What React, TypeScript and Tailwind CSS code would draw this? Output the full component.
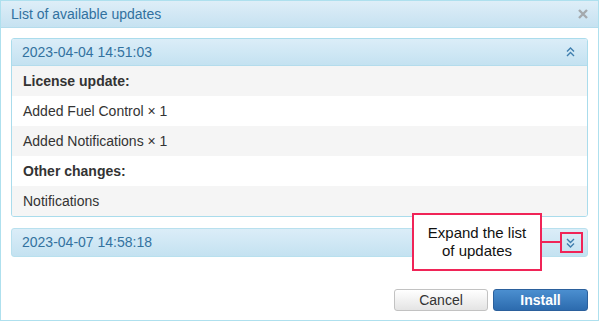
import React from 'react'

function Chevrons({ dir }: { dir: 'up' | 'down' }) {
  const d =
    dir === 'up'
      ? 'M1 4.5 L4.5 1 L8 4.5 M1 9 L4.5 5.5 L8 9'
      : 'M1 1 L4.5 4.5 L8 1 M1 5.5 L4.5 9 L8 5.5'
  return (
    <svg width="9" height="10" viewBox="0 0 9 10" className="block">
      <path d={d} fill="none" stroke="#3f7eae" strokeWidth="1.4" />
    </svg>
  )
}

const rows = [
  { text: 'License update:', bold: true },
  { text: 'Added Fuel Control × 1' },
  { text: 'Added Notifications × 1' },
  { text: 'Other changes:', bold: true },
  { text: 'Notifications' },
]

export default function App() {
  return (
    <div className="w-[600px] h-[323px] bg-white font-['Liberation_Sans',Arial,sans-serif] relative">
      <div className="w-[599px] h-[321px] border border-[#aee0ee] flex flex-col">
        {/* Title */}
        <div className="h-[27px] flex items-center justify-between pl-[10px] pr-[10px] bg-gradient-to-b from-[#deeef8] to-[#c6e2f1] border-b border-[#b4dcec]">
          <span className="text-[14px] text-[#31719f]">List of available updates</span>
          <svg width="10" height="10" viewBox="0 0 10 10">
            <path d="M1 1 L9 9 M9 1 L1 9" stroke="#a4a9ad" strokeWidth="2.4" />
          </svg>
        </div>

        {/* Body */}
        <div className="flex-1 flex flex-col px-[10px] pt-[10px]">
          <div className="border border-[#aadcec] rounded-[3px] overflow-hidden">
            <div className="h-[27px] flex items-center justify-between pl-[10px] pr-[12px] bg-gradient-to-b from-[#dbedf8] to-[#c4e2f1] border-b border-[#b4dcec]">
              <span className="text-[14px] text-[#33729f]">2023-04-04 14:51:03</span>
              <Chevrons dir="up" />
            </div>
            {rows.map((r, i) => (
              <div
                key={r.text}
                className={`h-[30px] flex items-center pl-[11px] text-[14px] text-[#333] ${
                  i % 2 === 0 ? 'bg-[#f5f5f5]' : 'bg-white'
                } ${r.bold ? 'font-bold' : ''}`}
              >
                {r.text}
              </div>
            ))}
          </div>

          <div className="mt-[11px] h-[29px] flex items-center justify-between pl-[10px] pr-[12px] rounded-[3px] border border-[#b8e0ee] bg-gradient-to-b from-[#dbedf8] to-[#c4e2f1]">
            <span className="text-[14px] text-[#33729f]">2023-04-07 14:58:18</span>
            <Chevrons dir="down" />
          </div>

          <div className="mt-auto mb-[9px] flex justify-end gap-[5px]">
            <button className="w-[94px] h-[22px] rounded-[3px] border border-[#c2c2c2] bg-gradient-to-b from-white to-[#e4e4e4] text-[14px] text-[#333]">
              Cancel
            </button>
            <button className="w-[95px] h-[22px] rounded-[3px] border border-[#2b609c] bg-gradient-to-b from-[#4b8fd0] to-[#2c6bae] text-[14px] font-bold text-white">
              Install
            </button>
          </div>
        </div>
      </div>

      {/* Callout */}
      <div className="absolute left-[412px] top-[213px] w-[130px] h-[58px] border-2 border-[#f02457] bg-white flex items-center justify-center text-center text-[15px] leading-[18px] text-[#111]">
        Expand the list
        <br />
        of updates
      </div>
      <div className="absolute left-[542px] top-[241px] w-[18px] h-[2px] bg-[#f02457]" />
      <div className="absolute left-[560px] top-[232px] w-[23px] h-[21px] border-2 border-[#f02457]" />
    </div>
  )
}
